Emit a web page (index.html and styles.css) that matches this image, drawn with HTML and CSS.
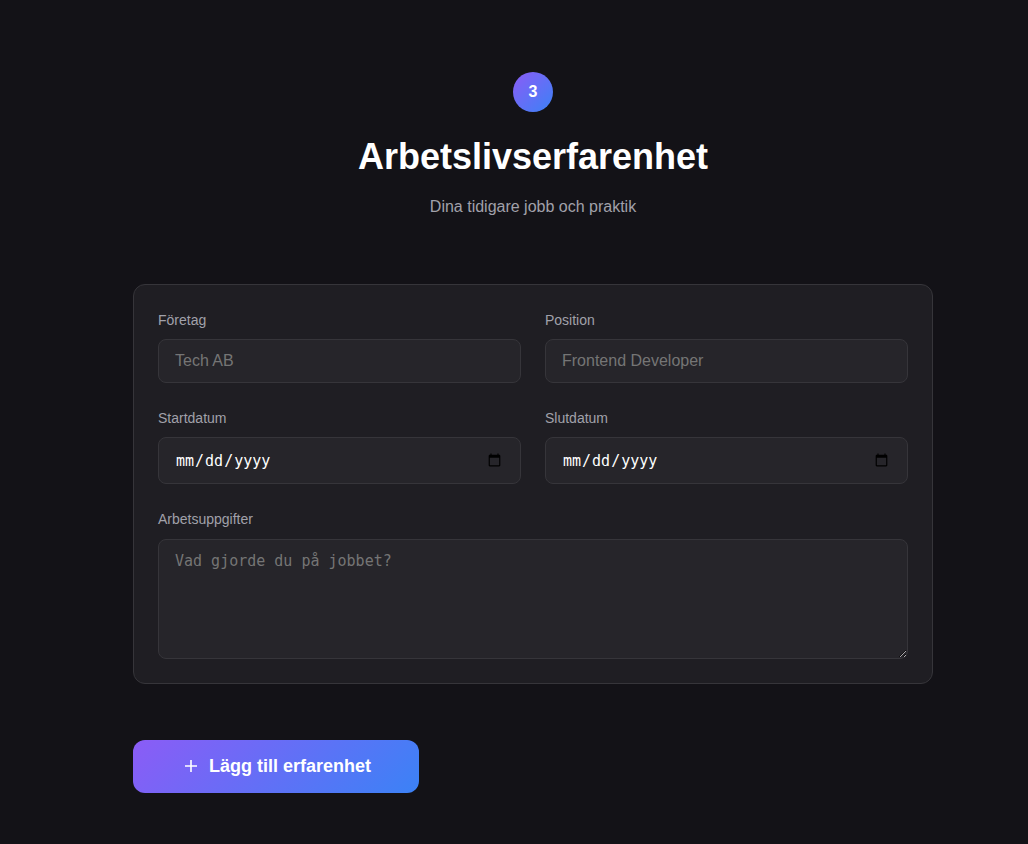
FILE: index.html
```html
<!DOCTYPE html>
<html lang="sv">
<head>
  <meta charset="utf-8">
  <meta name="viewport" content="width=device-width, initial-scale=1">
  <title>Arbetslivserfarenhet</title>
  <link rel="stylesheet" href="styles.css">
</head>
<body>
  <main class="section">
    <header class="section-header">
      <span class="step">3</span>
      <h1 class="title">Arbetslivserfarenhet</h1>
      <p class="subtitle">Dina tidigare jobb och praktik</p>
    </header>
    <form class="form">
      <div class="card">
        <div class="field">
          <label class="label" for="company">Företag</label>
          <input class="input" id="company" type="text" placeholder="Tech AB">
        </div>
        <div class="field">
          <label class="label" for="position">Position</label>
          <input class="input" id="position" type="text" placeholder="Frontend Developer">
        </div>
        <div class="field">
          <label class="label" for="start">Startdatum</label>
          <input class="input input-date" id="start" type="date">
        </div>
        <div class="field">
          <label class="label" for="end">Slutdatum</label>
          <input class="input input-date" id="end" type="date">
        </div>
        <div class="field field-wide">
          <label class="label" for="tasks">Arbetsuppgifter</label>
          <textarea class="input input-area" id="tasks" placeholder="Vad gjorde du på jobbet?"></textarea>
        </div>
      </div>
      <button class="add-button" type="button">
        <svg class="add-icon" viewBox="0 0 20 20" aria-hidden="true"><path d="M4 10h12M10 4v12"/></svg>
        Lägg till erfarenhet
      </button>
    </form>
  </main>
</body>
</html>
```

FILE: styles.css
```css
* {
  box-sizing: border-box;
}

body {
  margin: 0;
  background: #131217;
  color: #ffffff;
  font-family: "Liberation Sans", Arial, sans-serif;
  font-size: 16px;
  line-height: 1.6;
}

.section {
  max-width: 858px;
  margin: 0 auto;
  padding: 72px 24px 48px 34px;
}

@media (min-width: 858px) {
  .section {
    max-width: none;
    width: 100%;
    padding-left: calc(50% - 381px);
    padding-right: calc(50% - 419px);
  }
}

.section-header {
  display: flex;
  flex-direction: column;
  align-items: center;
  margin-bottom: 64px;
  text-align: center;
}

.step {
  display: grid;
  place-items: center;
  width: 40px;
  height: 40px;
  margin-bottom: 16px;
  border-radius: 50%;
  background: linear-gradient(135deg, #8b5cf6, #3b82f6);
  font-weight: 700;
}

.title {
  margin: 0 0 8px;
  font-size: 36px;
  font-weight: 700;
  line-height: 58px;
}

.subtitle {
  margin: 0;
  color: #a1a1aa;
}

.form {
  display: flex;
  flex-direction: column;
  align-items: flex-start;
  gap: 56px;
}

.card {
  display: grid;
  grid-template-columns: 1fr 1fr;
  gap: 24px;
  width: 100%;
  padding: 24px;
  border: 1px solid #36353a;
  border-radius: 12px;
  background: #1f1e23;
}

.field {
  display: flex;
  flex-direction: column;
  gap: 8px;
  min-width: 0;
}

.field-wide {
  grid-column: 1 / -1;
}

.label {
  color: #a1a1aa;
  font-size: 14px;
}

.input {
  width: 100%;
  padding: 12px 16px;
  border: 1px solid #36353a;
  border-radius: 8px;
  background: #26252a;
  color: #ffffff;
  font-family: inherit;
  font-size: 16px;
}

.input::placeholder {
  color: #757575;
}

.input-date,
.input-area {
  font-family: Consolas, "DejaVu Sans Mono", monospace;
  font-size: 15px;
}

.input-date {
  height: 47px;
}

.input-area {
  display: block;
  min-height: 120px;
  resize: vertical;
}

.add-button {
  display: inline-flex;
  align-items: center;
  gap: 8px;
  padding: 16px 48px;
  border: 0;
  border-radius: 12px;
  background: linear-gradient(135deg, #8b5cf6, #3b82f6);
  color: #ffffff;
  font-family: inherit;
  font-size: 18px;
  font-weight: 700;
  cursor: pointer;
}

.add-icon {
  width: 20px;
  height: 20px;
  fill: none;
  stroke: currentColor;
  stroke-width: 1.6;
}
```
